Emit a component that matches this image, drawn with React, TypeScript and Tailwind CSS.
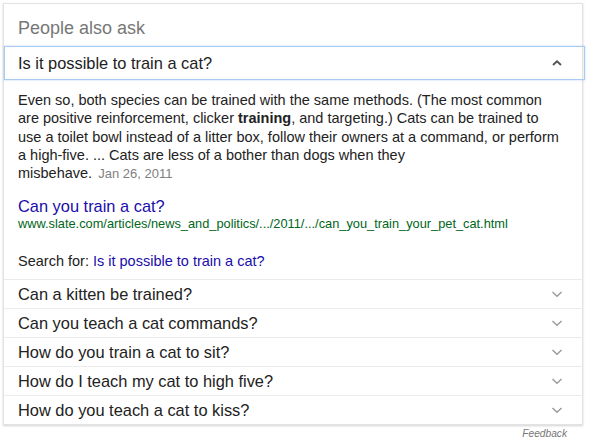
import React from "react";

const questions = [
  "Can a kitten be trained?",
  "Can you teach a cat commands?",
  "How do you train a cat to sit?",
  "How do I teach my cat to high five?",
  "How do you teach a cat to kiss?",
];

const Chevron = ({ up, color }: { up?: boolean; color: string }) => (
  <svg width="12" height="8" viewBox="0 0 12 8" className="shrink-0">
    <path
      d={up ? "M2 6 L6 2.2 L10 6" : "M1.5 2 L6 6.3 L10.5 2"}
      fill="none"
      stroke={color}
      strokeWidth={up ? 1.9 : 1.4}
    />
  </svg>
);

export default function App() {
  return (
    <div className="min-h-[443px] bg-white pt-[3px] pl-[3px] font-['Liberation_Sans',Arial,sans-serif]">
      <div className="w-[580px] border border-[#e3e3e3] shadow-[0_1px_2px_rgba(0,0,0,0.18)]">
        <div className="px-[14px] pt-[13px] pb-[7px] text-[18px] leading-[22px] text-[#777]">
          People also ask
        </div>

        <div className="-mr-[3px] flex h-[34px] items-center justify-between border border-[#a9cbf3] pl-[13px] pr-[21px] shadow-[0_0_2px_rgba(120,170,240,0.5)]">
          <span className="text-[16.4px] text-[#222]">Is it possible to train a cat?</span>
          <Chevron up color="#555" />
        </div>

        <div className="border-b border-[#ebebeb] px-[14px] pt-[11px] pb-[9px]">
          <p className="text-[14.5px] leading-[18.3px] text-[#222]">
            Even so, both species can be trained with the same methods. (The most common
            <br />
            are positive reinforcement, clicker <b>training</b>, and targeting.) Cats can be trained to
            <br />
            use a toilet bowl instead of a litter box, follow their owners at a command, or perform
            <br />
            a high-five. ... Cats are less of a bother than dogs when they
            <br />
            <span className="whitespace-nowrap">
              misbehave. <span className="pl-[2px] text-[13px] text-[#808080]">Jan 26, 2011</span>
            </span>
          </p>
          <div className="mt-[13px] text-[16.4px] leading-[20px] text-[#1a0dab]">Can you train a cat?</div>
          <div className="text-[12.8px] leading-[16px] text-[#006621]">
            www.slate.com/articles/news_and_politics/.../2011/.../can_you_train_your_pet_cat.html
          </div>
          <div className="mt-[20px] text-[14.5px] leading-[18px] text-[#222]">
            Search for: <span className="text-[#1a0dab]">Is it possible to train a cat?</span>
          </div>
        </div>

        {questions.map((q, i) => (
          <div
            key={q}
            className={
              i === 0
                ? "flex h-[28px] items-center justify-between pl-[14px] pr-[19px]"
                : "flex h-[29px] items-center justify-between border-t border-[#ebebeb] pl-[14px] pr-[19px]"
            }
          >
            <span className="text-[16.4px] text-[#222]">{q}</span>
            <Chevron color="#9a9a9a" />
          </div>
        ))}
      </div>
      <div className="w-[580px] pr-[16px] pt-[2px] text-right text-[10.2px] italic leading-[13px] text-[#777]">
        Feedback
      </div>
    </div>
  );
}
